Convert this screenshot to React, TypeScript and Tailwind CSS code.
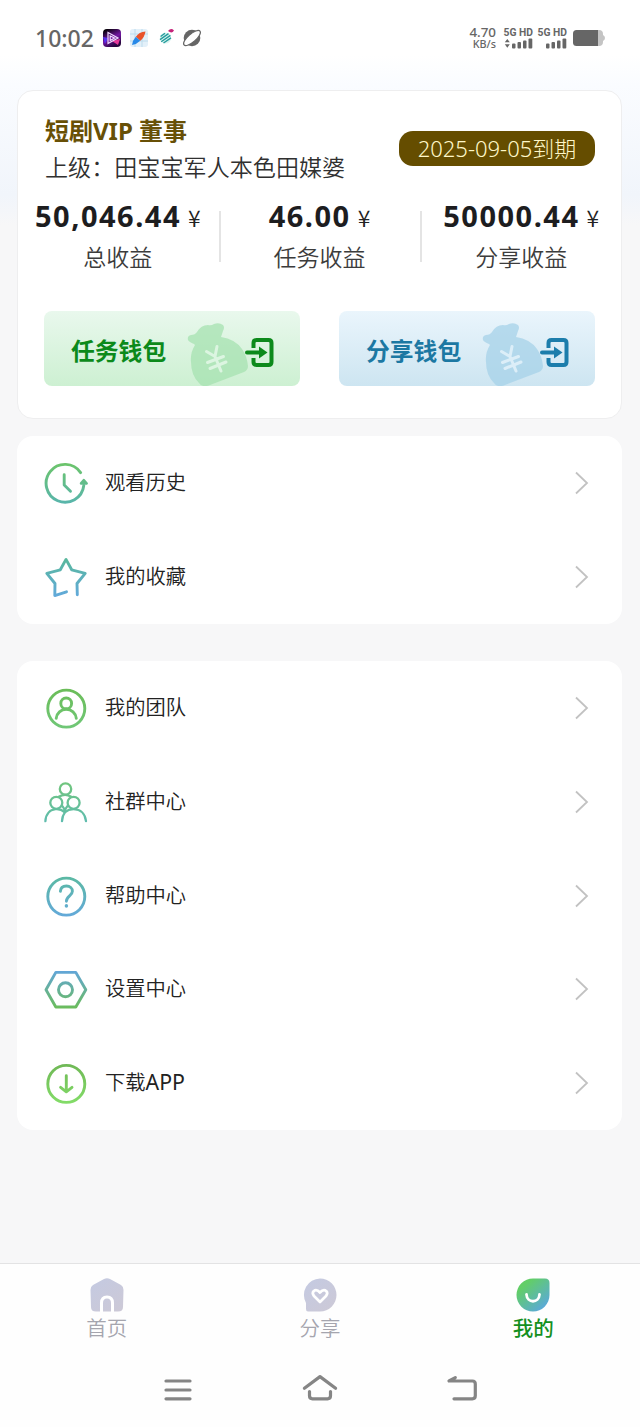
import type { ReactNode } from "react";

type IconName =
  | "history"
  | "star"
  | "team"
  | "community"
  | "help"
  | "settings"
  | "download";

type MenuEntry = {
  icon: IconName;
  label: string;
  latin?: string;
};

const stats = [
  { value: "50,046.44", label: "总收益" },
  { value: "46.00", label: "任务收益" },
  { value: "50000.44", label: "分享收益" },
];

const libraryMenu: MenuEntry[] = [
  { icon: "history", label: "观看历史" },
  { icon: "star", label: "我的收藏" },
];

const serviceMenu: MenuEntry[] = [
  { icon: "team", label: "我的团队" },
  { icon: "community", label: "社群中心" },
  { icon: "help", label: "帮助中心" },
  { icon: "settings", label: "设置中心" },
  { icon: "download", label: "下载", latin: "APP" },
];

const iconColors: Record<IconName, [string, string]> = {
  history: ["#6cc46c", "#58b5ab"],
  star: ["#58b89b", "#62a9dc"],
  team: ["#6bbd59", "#70c777"],
  community: ["#70c57e", "#5fbcae"],
  help: ["#5bb9a3", "#63a9d9"],
  settings: ["#62a5dc", "#6bbd58"],
  download: ["#6fb856", "#83dc68"],
};

const iconShapes: Record<IconName, ReactNode> = {
  history: (
    <>
      <path d="M36.6 11.6A18.9 18.9 0 1 0 39.8 24.5" />
      <path d="M37.2 22.4 39.8 19.4 42.4 22.4Z" />
      <path d="M20.2 13.8V24L26.5 30.2" />
    </>
  ),
  star: (
    <path d="M33.3 39.8 33 28.5 41.2 18.4 27.7 14.8 22 4.4 16.3 14.8 2.8 18.4 11 28.5 10.8 40.6 22.5 36.8" />
  ),
  team: (
    <>
      <circle cx="22.3" cy="22.6" r="18.5" />
      <circle cx="22.2" cy="17.4" r="5.4" />
      <path d="M12.2 32.3A10.1 10.1 0 0 1 32.3 32.3" />
    </>
  ),
  community: (
    <g strokeWidth="2.3">
      <circle cx="21.5" cy="9" r="5.7" />
      <circle cx="12.3" cy="22.8" r="6" />
      <circle cx="29.6" cy="22.8" r="6" />
      <path d="M14.7 16.7Q21.2 13 27.2 16.7" />
      <path d="M1.4 41.2C1.8 34 6 29.7 11.5 29.2C15.5 28.8 18.5 30.2 20.6 32.2" />
      <path d="M18 41.2C18.3 33.5 23 29.2 29.5 29.2C36.7 29.2 41.3 34 42 41.2" />
      <path d="M18.3 26C20 27.7 20.8 29.6 20.8 32M23.5 26C21.8 27.7 21 29.6 20.8 32" />
    </g>
  ),
  help: (
    <>
      <circle cx="22.3" cy="22.6" r="18.5" />
      <path d="M16.4 17.4C16.6 13.7 19 12 22.4 12C26 12 28.4 14.2 28.4 17.2C28.4 21.7 22.4 22 22.4 27.2" />
      <path d="M22.4 31.8V32.1" strokeWidth="3.4" />
    </>
  ),
  settings: (
    <>
      <path d="M11.8 5.4H31.8L41.8 22.8 31.8 40H11.8L2 22.8Z" />
      <circle cx="21.5" cy="22.8" r="7" />
    </>
  ),
  download: (
    <>
      <circle cx="22.3" cy="22.9" r="18.5" />
      <path d="M22.3 14.8V30.6M16.6 26.4 22.3 30.8 28 26.4" />
    </>
  ),
};

const MenuIcon = ({ name }: { name: IconName }) => {
  const [from, to] = iconColors[name];
  const id = `stroke-${name}`;
  return (
    <svg
      className="h-11 w-11 shrink-0"
      viewBox="0 0 44 44"
      fill="none"
      stroke={`url(#${id})`}
      strokeWidth="2.9"
      strokeLinecap="round"
      strokeLinejoin="round"
    >
      <defs>
        <linearGradient id={id} gradientUnits="userSpaceOnUse" x1="0" y1="3" x2="0" y2="42">
          <stop stopColor={from} />
          <stop offset="1" stopColor={to} />
        </linearGradient>
      </defs>
      {iconShapes[name]}
    </svg>
  );
};

const MenuCard = ({ entries }: { entries: MenuEntry[] }) => (
  <div className="rounded-2xl bg-white">
    {entries.map((entry) => (
      <div key={entry.icon} className="flex h-[93.9px] items-center pr-[33px] pl-[27px]">
        <MenuIcon name={entry.icon} />
        <span className="ml-[17px] flex-1 pb-0.5 text-[20.3px] leading-7 font-[350] text-[#222]">
          {entry.label}
          {entry.latin ? (
            <span className="text-[21.3px] font-normal">{entry.latin}</span>
          ) : null}
        </span>
        <svg className="h-6 w-4" viewBox="0 0 16 24" fill="none" stroke="#c2c2c2" strokeWidth="1.8">
          <path d="M3 1.5 14 12 3 22.5" />
        </svg>
      </div>
    ))}
  </div>
);

const Signal = ({ arrows }: { arrows?: boolean }) => (
  <div className="flex w-[29px] flex-col items-end">
    <span className="font-[Roboto] text-[10.3px] leading-[11px] font-bold whitespace-nowrap">
      5G HD
    </span>
    <svg className="h-[11px] w-[29px]" viewBox="0 0 29 11" fill="currentColor">
      {arrows ? <path d="M0.8 4.3 3.3 1 5.8 4.3ZM0.8 6.2H5.8L3.3 9.8Z" /> : null}
      <rect x="8" y="5.4" width="3.5" height="5" rx="1" />
      <rect x="13.5" y="4" width="3.5" height="6.4" rx="1" />
      <rect x="19" y="2.5" width="3.5" height="7.9" rx="1" />
      <rect x="24.5" y="0.6" width="3.8" height="9.8" rx="1" />
    </svg>
  </div>
);

const StatusBar = () => (
  <div className="flex h-[90px] items-start justify-between pt-[25px] pr-[35px] pl-[35px] text-[#666]">
    <div className="flex items-center">
      <span className="w-[67px] font-['Noto_Sans'] text-[23px] leading-[26px] font-medium">
        10:02
      </span>
      <svg className="h-[18px] w-[100px]" viewBox="0 0 100 18">
        <defs>
          <linearGradient id="player" x1="0" y1="0" x2="0.5" y2="1">
            <stop offset="0.1" stopColor="#050008" />
            <stop offset="0.6" stopColor="#7417a4" />
            <stop offset="1" stopColor="#28053f" />
          </linearGradient>
        </defs>
        <rect x="1" width="18" height="18" rx="4" fill="url(#player)" />
        <path d="M1 8 6 9 3 15Z" fill="#5730ef" />
        <path d="M10 12 18 10 16 16Z" fill="#e5389a" />
        <path
          d="M6 3.5 16 9 6 14.5ZM8.2 7V11.5L12.5 9Z"
          fill="none"
          stroke="#f1dcff"
          strokeWidth="1.2"
        />
        <rect x="28" width="18" height="18" rx="3" fill="#e3f0f9" />
        <path d="M28 5H46M28 12H46M33 0V18M40 0V18" stroke="#bddced" />
        <path d="M43.5 2.5Q37 3 33.8 7.8L38.3 11.8Q42.5 8.5 43.5 2.5Z" fill="#e9532b" />
        <path d="M30 16Q30.5 11.5 33.8 7.8L38.3 11.8Q34.5 15.5 30 16Z" fill="#2789e8" />
        <circle cx="63.5" cy="9" r="5.6" fill="#daf3ef" />
        <path
          d="M58.6 7.5 63 4.2M58 10.6 66.5 4.6M59.2 12.8 68.4 6.4M61.5 14 69 8.8"
          stroke="#269c9d"
          strokeWidth="1.4"
        />
        <path d="M66 2Q69 -1.5 72 1.5Q70 5 66 2Z" fill="#c52379" />
        <circle cx="90" cy="9" r="8.3" fill="#666" />
        <ellipse
          cx="90"
          cy="9"
          rx="10.6"
          ry="4"
          fill="white"
          stroke="#666"
          strokeWidth="1.2"
          transform="rotate(-41 90 9)"
        />
      </svg>
    </div>
    <div className="flex pt-0.5 font-['Noto_Sans']">
      <div className="mr-[8px] flex w-[28px] flex-col items-end font-medium">
        <span className="text-[13.4px] leading-[11px]">4.70</span>
        <span className="text-[10.8px] leading-[12px]">KB/s</span>
      </div>
      <Signal arrows />
      <span className="w-[5px]" />
      <Signal />
      <svg className="mt-[2px] ml-[5px] h-[18px] w-[33px]" viewBox="0 0 33 18">
        <path
          d="M4 1H27Q31 1 31 5V6Q33 7 33 9T31 12V13Q31 17 27 17H4Z"
          fill="#c4c4c4"
        />
        <path d="M4.5 1H26V17H4.5Q1 17 1 13.5V4.5Q1 1 4.5 1Z" fill="#666" />
      </svg>
    </div>
  </div>
);

const WalletArt = ({ bag, mark, enter }: { bag: string; mark: string; enter: string }) => (
  <svg className="h-[74px] w-[90px]" viewBox="0 0 90 74" fill="none">
    <g fill={bag} className="opacity-75">
      <path d="M7 32Q2 30 1 28Q0 24 4 23Q8 23 10 20Q14 13 21 13Q24 14 27 12Q32 10 36 13Q38 15 36 19L34 25Q48 27 55 37Q60 44 61 54Q61 58 57 60L23 73Q15 76 12 71Q4 63 4 50Q3 41 8 33Z" />
    </g>
    <path
      d="M19.5 39.5 28 44.5 30 34.5M28 44.5 34 59M20.5 50.5 36.5 44.5M23 56.5 39 50"
      stroke={mark}
      strokeWidth="3"
      strokeLinecap="round"
    />
    <path
      d="M66.5 36V31Q66.5 28 69.5 28H81.5Q84.5 28 84.5 31V50Q84.5 53 81.5 53H69.5Q66.5 53 66.5 50V46"
      stroke={enter}
      strokeWidth="4"
    />
    <path d="M60 40.5H73" stroke={enter} strokeWidth="4" strokeLinecap="round" />
    <path d="M72 34.5 80.5 40.5 72 46.5Z" fill={enter} />
  </svg>
);

const ProfileCard = () => (
  <div className="h-[329px] rounded-2xl border border-[#eeeeef] bg-white">
    <div className="flex items-start justify-between pt-[24px] pr-[26px] pl-[27px]">
      <div className="whitespace-nowrap">
        <h1 className="text-[24px] leading-8 font-bold text-[#685006]">短剧VIP 董事</h1>
        <p className="mt-0.5 text-[23.1px] leading-9 font-[350] text-[#303030]">
          上级：田宝宝军人本色田媒婆
        </p>
      </div>
      <div className="mt-[16px] flex h-[35px] w-[196px] items-center justify-center rounded-[14px] bg-[#654d00] pb-px text-[22px] font-light whitespace-nowrap text-[#fff8c9]">
        2025-09-05到期
      </div>
    </div>

    <div className="-mx-px mt-[13px] flex">
      {stats.map((stat, index) => (
        <div key={stat.label} className="relative flex flex-1 flex-col items-center">
          <div className="flex items-baseline whitespace-nowrap">
            <span className="font-['Noto_Sans'] text-[29px] leading-9 font-bold tracking-[1.5px] text-[#1d1d1f]">
              {stat.value}
            </span>
            <span className="ml-[7px] font-['Noto_Sans_CJK_SC'] text-[23px] leading-9 font-[350] text-[#222]">
              ¥
            </span>
          </div>
          <span className="mt-0.5 text-[23px] leading-10 font-[350] text-[#3c3c3c]">
            {stat.label}
          </span>
          {index ? (
            <span className="absolute top-[13px] left-0 h-[51px] w-0.5 bg-[#e4e4e4]" />
          ) : null}
        </div>
      ))}
    </div>

    <div className="mt-[34px] flex justify-between px-[26px]">
      <div className="flex h-[75px] w-[256px] items-center justify-between rounded-lg bg-linear-to-b from-[#e9f8ed] to-[#cdf0d2] pr-[23px] pl-[27px]">
        <span className="pt-1.5 text-[23.8px] font-bold text-[#0c8a1b]">任务钱包</span>
        <WalletArt bag="#a5e2b0" mark="#dcf5e1" enter="#0c8a1b" />
      </div>
      <div className="flex h-[75px] w-[256px] items-center justify-between rounded-lg bg-linear-to-b from-[#eaf5fc] to-[#cde5f1] pr-[23px] pl-[27px]">
        <span className="pt-1.5 text-[23.8px] font-bold text-[#1c78a3]">分享钱包</span>
        <WalletArt bag="#a6d2e8" mark="#dceef8" enter="#1c7dab" />
      </div>
    </div>
  </div>
);

const TabBar = () => (
  <div className="grid h-[93px] grid-cols-3 border-t border-[#e3e3e4] pt-[14px] text-[20.5px] leading-8 text-[#a5a5ae]">
    <div className="flex flex-col items-center">
      <svg className="h-[34px] w-[34px]" viewBox="0 0 34 34">
        <defs>
          <linearGradient id="muted" x1="0" y1="0" x2="0.8" y2="1">
            <stop stopColor="#c4cae2" />
            <stop offset="1" stopColor="#ccc9d7" />
          </linearGradient>
        </defs>
        <path
          d="M14 1Q17 -0.5 20 1L31 7Q33.5 8.5 33.5 12L33 29Q33 33.5 28 33.5H6Q1 33.5 1 29L0.5 12Q0.5 8.5 3 7Z"
          fill="url(#muted)"
        />
        <path d="M11.5 34V25Q11.5 19 17 19T22.5 25V34" fill="none" stroke="white" strokeWidth="3" />
      </svg>
      <span className="font-[350]">首页</span>
    </div>
    <div className="flex flex-col items-center">
      <svg className="h-[34px] w-[34px]" viewBox="0 0 34 34">
        <path
          d="M17 0.5A16.5 16.5 0 0 1 17 33.5H5Q3 33.5 3 31V25A16.5 16.5 0 0 1 17 0.5Z"
          fill="url(#muted)"
        />
        <path
          d="M17 24 11 18Q8.8 15.5 10.6 13.2Q13.5 10.7 17 14.5Q20.5 10.7 23.4 13.2Q25.2 15.5 23 18Z"
          fill="none"
          stroke="white"
          strokeWidth="2.7"
          strokeLinejoin="round"
        />
      </svg>
      <span className="font-[350]">分享</span>
    </div>
    <div className="flex flex-col items-center text-[#14901e]">
      <svg className="h-[34px] w-[34px]" viewBox="0 0 34 34">
        <defs>
          <linearGradient id="mine" x1="0.1" y1="0.1" x2="0.85" y2="0.95">
            <stop offset="0.15" stopColor="#62ce67" />
            <stop offset="1" stopColor="#5aa7df" />
          </linearGradient>
        </defs>
        <path
          d="M17 0.5H29Q33.5 0.5 33.5 5V17A16.5 16.5 0 1 1 17 0.5Z"
          fill="url(#mine)"
        />
        <path
          d="M10.5 16.5C11 25.5 23 25.5 23.5 16.5"
          fill="none"
          stroke="white"
          strokeWidth="2.8"
          strokeLinecap="round"
        />
      </svg>
      <span className="font-medium">我的</span>
    </div>
  </div>
);

const SystemNav = () => (
  <div className="flex h-[71px] items-center justify-center gap-[108px] pb-1">
    <svg className="h-[34px] w-[34px]" viewBox="0 0 34 34" fill="none" stroke="#858585" strokeWidth="3.2" strokeLinecap="round">
      <path d="M5 8H29M5 17H29M5 25.8H29" />
    </svg>
    <svg className="h-[34px] w-[34px] overflow-visible" viewBox="0 0 34 34" fill="none" stroke="#858585" strokeWidth="3.2" strokeLinecap="round" strokeLinejoin="round">
      <path d="M1.4 15.3 17 3.6 32.6 15.3M6.5 18.5V22.8Q6.5 25.8 9.5 25.8H24.5Q27.5 25.8 27.5 22.8V18.5" />
    </svg>
    <svg className="h-[34px] w-[34px]" viewBox="0 0 34 34" fill="none" stroke="#858585" strokeWidth="3.2" strokeLinecap="round" strokeLinejoin="round">
      <path d="M10.3 4.6 4 8H27.3Q30.3 8 30.3 11V22.8Q30.3 25.8 27.3 25.8H9" />
    </svg>
  </div>
);

export default function App() {
  return (
    <div className="flex h-[1427px] w-[640px] flex-col bg-[#f7f7f8] bg-linear-[180deg,#fff_0,#fff_55px,#fafcff_85px,#f1f5fb_195px,#f7f7f8_225px] font-['Noto_Sans','Noto_Sans_CJK_SC',sans-serif]">
      <StatusBar />
      <main className="flex-1 pr-[18px] pl-[17px]">
        <ProfileCard />
        <div className="mt-[17px]">
          <MenuCard entries={libraryMenu} />
        </div>
        <div className="mt-[37px]">
          <MenuCard entries={serviceMenu} />
        </div>
      </main>
      <footer className="bg-[#fefefe]">
        <TabBar />
        <SystemNav />
      </footer>
    </div>
  );
}
